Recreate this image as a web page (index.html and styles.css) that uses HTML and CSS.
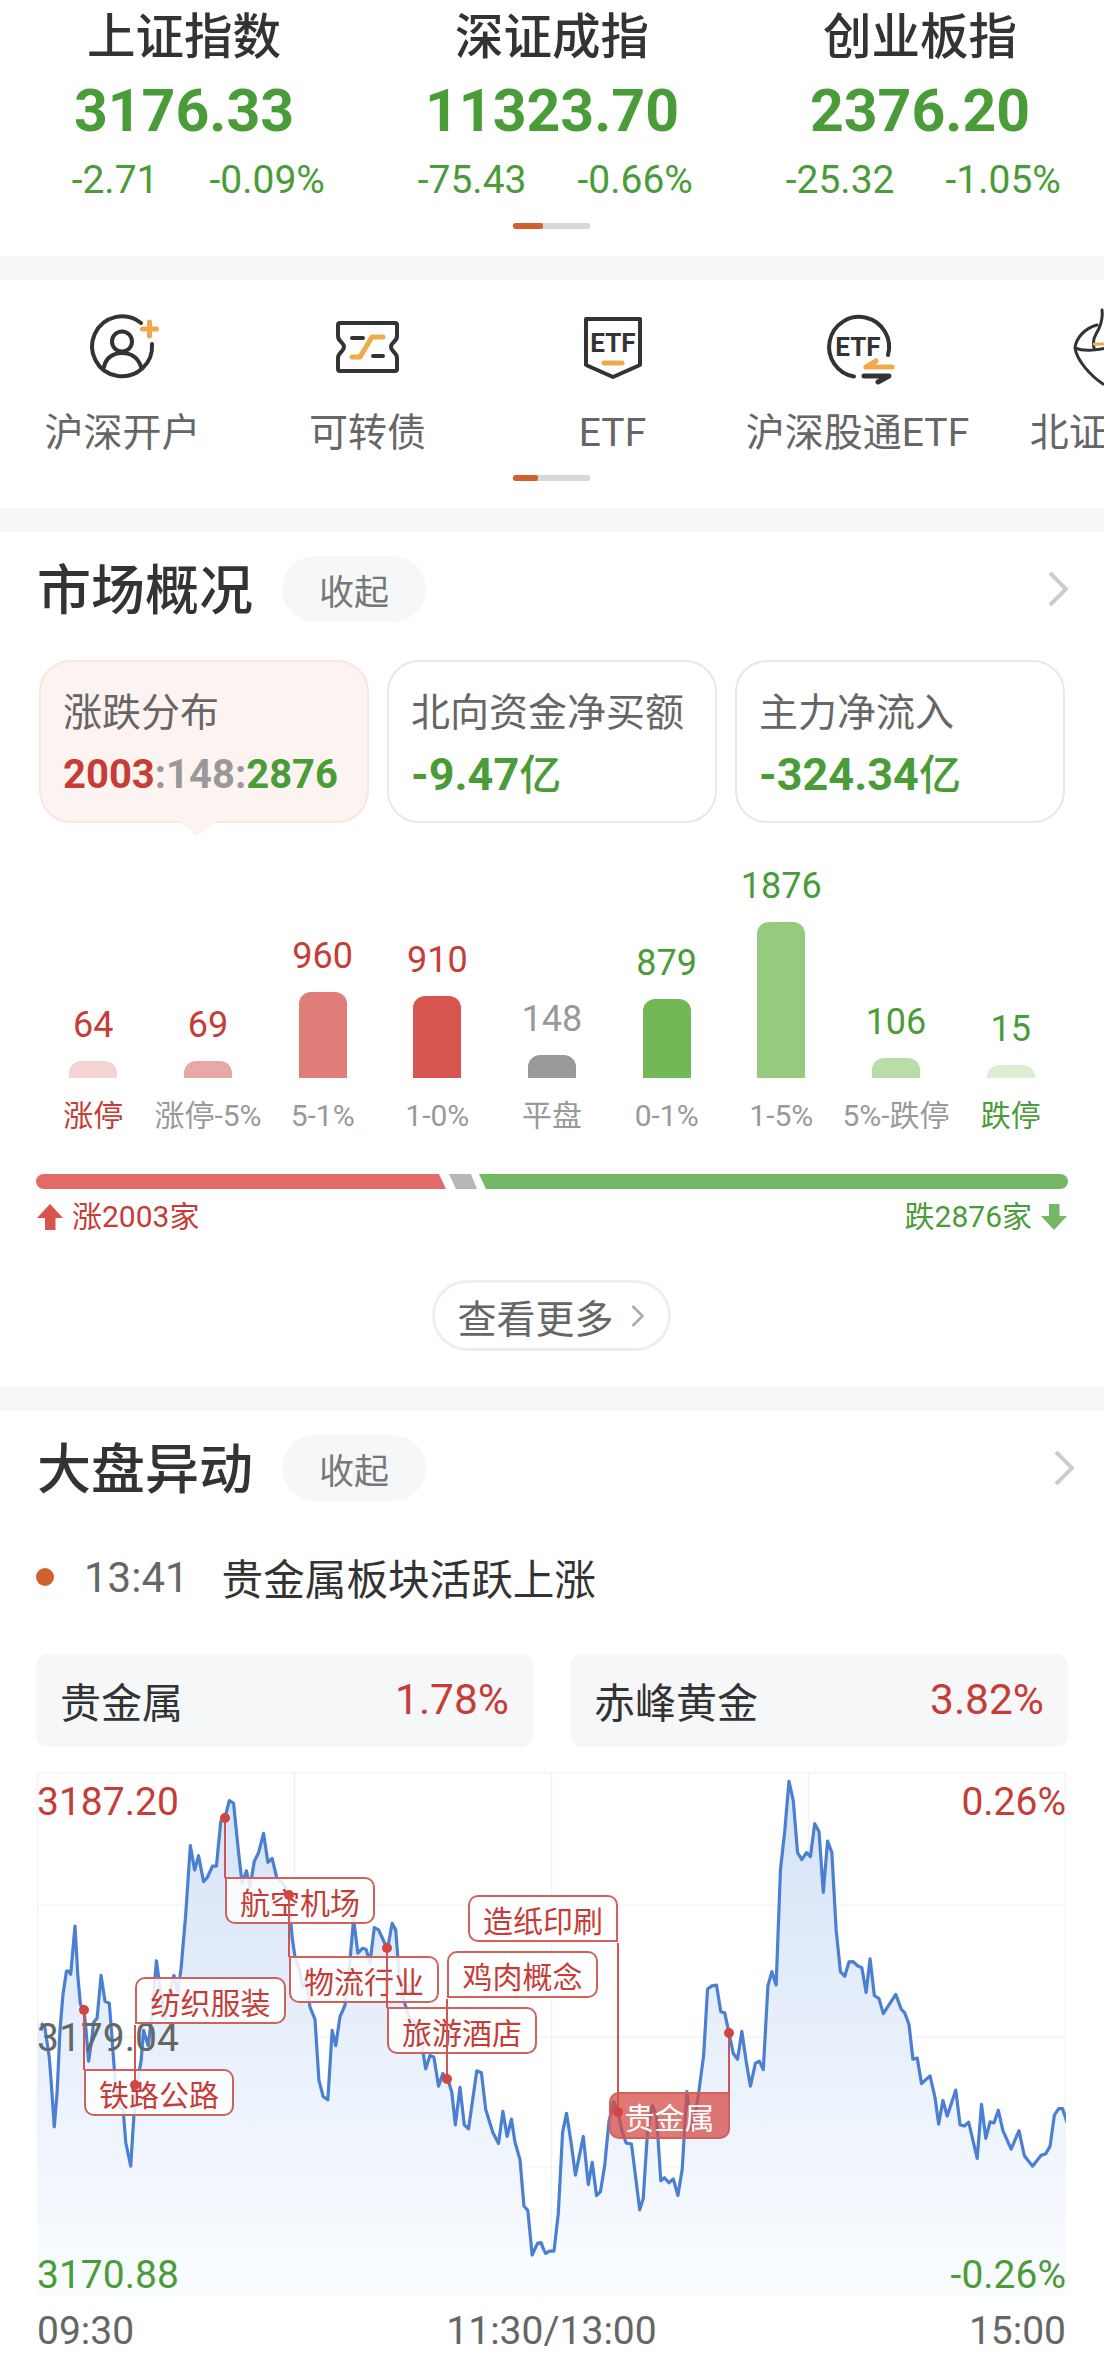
FILE: index.html
```html
<!DOCTYPE html>
<html lang="zh-CN">
<head>
<meta charset="utf-8">
<title>行情</title>
<link rel="stylesheet" href="styles.css">
</head>
<body>
<main class="page">
  <section class="panel indices">
    <div class="index-grid">
      <div class="index"><div class="index-name">上证指数</div><div class="index-value">3176.33</div><div class="index-change"><span>-2.71</span><span>-0.09%</span></div></div>
      <div class="index"><div class="index-name">深证成指</div><div class="index-value">11323.70</div><div class="index-change"><span>-75.43</span><span>-0.66%</span></div></div>
      <div class="index"><div class="index-name">创业板指</div><div class="index-value">2376.20</div><div class="index-change"><span>-25.32</span><span>-1.05%</span></div></div>
    </div>
    <div class="pager pager-a"><i></i></div>
  </section>

  <section class="panel shortcuts">
    <div class="shortcut-row">
      <div class="shortcut">
        <svg class="ico" viewBox="0 0 80 80"><path class="dk" d="M58 17A30 30 0 1 0 69 38"/><circle class="dk" cx="39" cy="35.5" r="10"/><path class="dk" d="M21 61C23 51 31 47 39 47C47 47 55 51 58 61"/><path class="or" d="M66.500 16V30M59.500 23H73.500"/></svg>
        <span>沪深开户</span>
      </div>
      <div class="shortcut">
        <svg class="ico" viewBox="0 0 80 80"><path class="dk" d="M12 17H67a2 2 0 0 1 2 2V30C69 36 63 36 63 41C63 46 69 46 69 52V63a2 2 0 0 1-2 2H12a2 2 0 0 1-2-2V52C10 46 16 46 16 41C16 36 10 36 10 30V19a2 2 0 0 1 2-2Z"/><path class="dk" d="M24 32H35M45 50H55"/><path class="or" d="M24 51H32L44 31H55"/></svg>
        <span>可转债</span>
      </div>
      <div class="shortcut">
        <svg class="ico" viewBox="0 0 80 80"><path class="dk" d="M13 13H67V59L40 71L13 59Z"/><text class="ico-text" x="40" y="46">ETF</text><path class="or" d="M31 57H49"/></svg>
        <span>ETF</span>
      </div>
      <div class="shortcut">
        <svg class="ico" viewBox="0 0 80 80"><path class="dk" d="M70 49A30 30 0 1 0 36 70.500"/><text class="ico-text" x="40" y="50">ETF</text><path class="or" d="M48 61H74M48 61L58 55"/><path class="dk thick" d="M46 70H71L60 76"/></svg>
        <span>沪深股通ETF</span>
      </div>
      <div class="shortcut">
        <svg class="ico" viewBox="0 0 80 80"><path class="dk thin" d="M34 19C22 22 13 32 12 42C14 55 28 70 40 78M12 42C22 46 32 44 44 42M39 4C40 12 38 20 33 28C30 33 30 38 31 42"/><path class="or thin" d="M31 38H46"/></svg>
        <span>北证ETF</span>
      </div>
    </div>
    <div class="pager pager-b"><i></i></div>
  </section>

  <section class="panel market">
    <header class="sec-head">
      <h2>市场概况</h2><button class="fold">收起</button>
      <svg class="chev" viewBox="0 0 20 36"><path d="M2 2L18 18L2 34"/></svg>
    </header>
    <div class="cards">
      <div class="card card-on"><div class="card-label">涨跌分布</div><div class="card-value card-ratio"><b class="red">2003</b><b class="gray">:148:</b><b class="green">2876</b></div></div>
      <div class="card"><div class="card-label">北向资金净买额</div><div class="card-value green">-9.47<em>亿</em></div></div>
      <div class="card"><div class="card-label">主力净流入</div><div class="card-value green">-324.34<em>亿</em></div></div>
    </div>
    <div class="bars">
      <div class="bar-col red"><span>64</span><i class="bar b1" style="height:17px"></i></div>
      <div class="bar-col red"><span>69</span><i class="bar b2" style="height:17px"></i></div>
      <div class="bar-col red"><span>960</span><i class="bar b3" style="height:86px"></i></div>
      <div class="bar-col red"><span>910</span><i class="bar b4" style="height:82px"></i></div>
      <div class="bar-col gray"><span>148</span><i class="bar b5" style="height:23px"></i></div>
      <div class="bar-col green"><span>879</span><i class="bar b6" style="height:79px"></i></div>
      <div class="bar-col green"><span>1876</span><i class="bar b7" style="height:156px"></i></div>
      <div class="bar-col green"><span>106</span><i class="bar b8" style="height:20px"></i></div>
      <div class="bar-col green"><span>15</span><i class="bar b9" style="height:13px"></i></div>
    </div>
    <div class="bar-labels">
      <span class="red">涨停</span><span>涨停-5%</span><span>5-1%</span><span>1-0%</span><span>平盘</span><span>0-1%</span><span>1-5%</span><span>5%-跌停</span><span class="green">跌停</span>
    </div>
    <svg class="split" viewBox="0 0 1032 15"><path fill="#e26b6a" d="M7.500 0H403L410 15H7.500A7.500 7.500 0 0 1 7.500 0Z"/><path fill="#b7b7b7" d="M413 0H435L441 15H420Z"/><path fill="#74b865" d="M443 0H1024.500A7.500 7.500 0 0 1 1024.500 15H450Z"/></svg>
    <div class="legend">
      <span class="legend-item red"><svg class="arrow" viewBox="0 0 26 26"><path fill="#d9534f" d="M13 0L26 14H18.500V26H8V14H0Z"/></svg>涨2003家</span>
      <span class="legend-item green">跌2876家<svg class="arrow" viewBox="0 0 26 26"><path fill="#74b865" d="M8 0H18.500V12H26L13 26L0 12H8Z"/></svg></span>
    </div>
    <button class="more">查看更多<svg class="more-chev" viewBox="0 0 13 22"><path d="M1.500 1L11.500 11L1.500 21"/></svg></button>
  </section>

  <section class="panel moves">
    <header class="sec-head sec-head-wide">
      <h2>大盘异动</h2><button class="fold">收起</button>
      <svg class="chev" viewBox="0 0 20 36"><path d="M2 2L18 18L2 34"/></svg>
    </header>
    <div class="event"><i class="event-dot"></i><span class="event-time">13:41</span><span class="event-text">贵金属板块活跃上涨</span></div>
    <div class="tiles">
      <div class="tile"><span>贵金属</span><b class="red">1.78%</b></div>
      <div class="tile"><span>赤峰黄金</span><b class="red">3.82%</b></div>
    </div>
    <div class="chart">
      <svg class="chart-svg" viewBox="37 12 1029 526" preserveAspectRatio="none">
        <defs>
          <linearGradient id="area" gradientUnits="userSpaceOnUse" x1="0" y1="30" x2="0" y2="1395"><stop offset="0" stop-color="#d4e2f7"/><stop offset="1" stop-color="#fbfdff"/></linearGradient>
        </defs>
        <g class="grid">
          <rect x="37.500" y="12.500" width="1028" height="525"/>
          <path d="M37 277H1066M294.500 12V538M551.500 12V538M808.500 12V538"/>
          <path class="dash" d="M37 145H1066M37 407H1066"/>
        </g>
        <g transform="scale(0.35714 0.3861)">
          <polygon class="area" points="103,680 115,682 125,690 138,770 143,830 152,950 160,860 168,700 176,610 186,547 192,547 198,555 210,430 218,560 225,632 235,650 240,690 248,780 256,730 262,680 272,668 283,558 294,625 306,630 312,700 320,800 328,880 335,900 345,905 352,990 366,1052 375,920 385,830 395,780 402,700 415,740 425,660 438,520 448,590 462,668 475,600 487,558 498,600 507,540 520,400 533,222 545,285 556,248 570,315 580,305 595,275 606,275 618,160 630,150 642,105 654,112 668,240 678,320 690,287 700,330 712,262 724,240 738,190 750,265 762,255 775,305 790,318 800,330 810,370 818,460 826,510 838,540 848,590 858,570 868,640 882,672 893,830 905,872 918,880 930,700 940,740 952,665 966,635 978,540 990,412 1002,500 1015,488 1025,490 1036,525 1048,434 1060,440 1075,470 1085,490 1098,423 1108,440 1118,560 1130,620 1145,665 1160,680 1180,730 1192,800 1204,765 1215,770 1228,845 1240,812 1255,830 1265,860 1275,945 1288,848 1300,945 1312,955 1335,805 1348,810 1360,905 1380,965 1396,993 1408,910 1420,975 1432,930 1442,990 1456,1035 1467,1155 1478,1167 1490,1282 1505,1252 1515,1250 1523,1270 1523,1395 103,1395"/>
          <polyline class="line" points="115,682 125,690 138,770 143,830 152,950 160,860 168,700 176,610 186,547 192,547 198,555 210,430 218,560 225,632 235,650 240,690 248,780 256,730 262,680 272,668 283,558 294,625 306,630 312,700 320,800 328,880 335,900 345,905 352,990 366,1052 375,920 385,830 395,780 402,700 415,740 425,660 438,520 448,590 462,668 475,600 487,558 498,600 507,540 520,400 533,222 545,285 556,248 570,315 580,305 595,275 606,275 618,160 630,150 642,105 654,112 668,240 678,320 690,287 700,330 712,262 724,240 738,190 750,265 762,255 775,305 790,318 800,330 810,370 818,460 826,510 838,540 848,590 858,570 868,640 882,672 893,830 905,872 918,880 930,700 940,740 952,665 966,635 978,540 990,412 1002,500 1015,488 1025,490 1036,525 1048,434 1060,440 1075,470 1085,490 1098,423 1108,440 1118,560 1130,620 1145,665 1160,680 1180,730 1192,800 1204,765 1215,770 1228,845 1240,812 1255,830 1265,860 1275,945 1288,848 1300,945 1312,955 1335,805 1348,810 1360,905 1380,965 1396,993 1408,910 1420,975 1432,930 1442,990 1456,1035 1467,1155 1478,1167 1490,1282 1505,1252 1515,1250 1523,1270"/>
        </g>
        <g transform="translate(544 0) scale(0.35714 0.3861)">
          <polygon class="area" points="0,1270 5,1278 15,1272 28,1272 40,1175 52,965 63,915 75,985 88,1075 110,975 124,1100 135,1042 147,1128 158,1118 170,1050 182,935 195,885 207,910 218,960 230,992 245,995 268,1165 278,1135 290,960 303,895 315,920 327,1090 337,1082 350,1095 362,1085 375,1128 387,1060 400,858 415,960 432,870 447,765 458,593 470,585 483,583 495,652 506,655 518,707 530,760 542,775 554,703 566,780 578,845 592,785 603,780 614,802 627,585 638,548 650,583 662,285 674,185 686,55 698,105 710,240 722,258 735,240 746,250 758,165 770,185 782,343 794,210 806,240 818,440 830,548 842,560 854,523 865,522 878,533 890,538 902,602 913,515 925,610 938,618 950,657 985,607 1000,645 1010,655 1022,685 1033,775 1045,772 1057,838 1081,818 1095,875 1105,943 1117,882 1129,922 1153,855 1165,945 1177,948 1189,938 1213,1032 1225,892 1237,980 1249,937 1260,940 1272,907 1285,960 1308,1008 1330,960 1345,1025 1368,1052 1392,1024 1405,1020 1417,1000 1429,920 1441,903 1452,903 1465,940 1465,1395 0,1395"/>
          <polyline class="line" points="0,1270 5,1278 15,1272 28,1272 40,1175 52,965 63,915 75,985 88,1075 110,975 124,1100 135,1042 147,1128 158,1118 170,1050 182,935 195,885 207,910 218,960 230,992 245,995 268,1165 278,1135 290,960 303,895 315,920 327,1090 337,1082 350,1095 362,1085 375,1128 387,1060 400,858 415,960 432,870 447,765 458,593 470,585 483,583 495,652 506,655 518,707 530,760 542,775 554,703 566,780 578,845 592,785 603,780 614,802 627,585 638,548 650,583 662,285 674,185 686,55 698,105 710,240 722,258 735,240 746,250 758,165 770,185 782,343 794,210 806,240 818,440 830,548 842,560 854,523 865,522 878,533 890,538 902,602 913,515 925,610 938,618 950,657 985,607 1000,645 1010,655 1022,685 1033,775 1045,772 1057,838 1081,818 1095,875 1105,943 1117,882 1129,922 1153,855 1165,945 1177,948 1189,938 1213,1032 1225,892 1237,980 1249,937 1260,940 1272,907 1285,960 1308,1008 1330,960 1345,1025 1368,1052 1392,1024 1405,1020 1417,1000 1429,920 1441,903 1452,903 1465,940"/>
        </g>
      </svg>
      <span class="axis-val val-hi red">3187.20</span>
      <span class="axis-val val-mid">3179.04</span>
      <span class="axis-val val-lo green">3170.88</span>
      <span class="axis-val pct-hi red">0.26%</span>
      <span class="axis-val pct-lo green">-0.26%</span>
      <div class="tag t-air">航空机场</div>
      <div class="tag t-rail">铁路公路</div>
      <div class="tag t-tex">纺织服装</div>
      <div class="tag t-log">物流行业</div>
      <div class="tag t-tour">旅游酒店</div>
      <div class="tag t-chick">鸡肉概念</div>
      <div class="tag t-paper">造纸印刷</div>
      <div class="tag t-gold">贵金属</div>
      <svg class="chart-svg" viewBox="37 1772 1029 526" preserveAspectRatio="none">
        <g class="links">
          <path d="M225 1818V1878M84 2010V2070M135 2025V2085M289 1895V1957M387 1948V2008M447 1999V2079M618 1943V2112M729 2033V2093"/>
        </g>
        <g class="dots">
          <circle cx="225" cy="1818" r="5"/><circle cx="84" cy="2010" r="5"/><circle cx="135" cy="2085" r="5"/><circle cx="289" cy="1895" r="5"/><circle cx="387" cy="1948" r="5"/><circle cx="447" cy="2079" r="5"/><circle cx="618" cy="2112" r="5"/><circle cx="729" cy="2033" r="5"/>
        </g>
      </svg>
    </div>
    <div class="time-axis"><span>09:30</span><span>11:30/13:00</span><span>15:00</span></div>
  </section>
</main>
</body>
</html>
```
FILE: styles.css
```css
* { box-sizing: border-box; }
html, body { margin: 0; padding: 0; background: #f6f7f9; }
body { width: 1104px; height: 2365px; overflow: hidden; font-family: Roboto, "Noto Sans CJK SC", sans-serif; color: #333; }
.page { display: flex; flex-direction: column; gap: 24px; height: 2365px; }
.panel { background: #fff; }
.red { color: #c53d36; }
.gray { color: #999; }
.green { color: #4a9c38; }

.indices { height: 256px; padding-top: 9px; }
.index-grid { display: grid; grid-template-columns: repeat(3, 368px); }
.index { display: flex; flex-direction: column; align-items: center; }
.index-name { font-size: 48.500px; line-height: 58px; font-weight: 500; color: #333; }
.index-value { font-size: 59px; line-height: 70px; font-weight: 700; color: #4a9c38; margin-top: 9px; }
.index-change { display: grid; grid-template-columns: 1fr 1fr; column-gap: 51px; width: 100%; margin-top: 12px; font-size: 39px; line-height: 44px; color: #4a9c38; }
.index-change span:first-child { text-align: right; }

.pager { width: 77px; height: 6px; margin: 21px 0 0 513px; background: #d4d7db; border-radius: 2px; overflow: hidden; }
.pager i { display: block; height: 100%; background: #d0602c; border-radius: 2px; }
.pager-a i { width: 30px; }
.pager-b i { width: 25px; }

.shortcuts { height: 228px; padding-top: 26px; overflow: hidden; }
.shortcut-row { display: flex; width: 1300px; height: 151px; }
.shortcut { width: 245px; flex: none; display: flex; flex-direction: column; align-items: center; }
.shortcut span { font-size: 39px; line-height: 50px; margin-top: 22px; color: #666; white-space: nowrap; }
.ico { width: 80px; height: 80px; overflow: visible; flex: none; }
.dk, .or { fill: none; stroke-linecap: round; stroke-linejoin: round; stroke-width: 4px; }
.dk { stroke: #333; }
.or { stroke: #eeaa4d; stroke-width: 5px; }
.thick { stroke-width: 5px; }
.thin { stroke-width: 3px; }
.ico-text { font-family: Roboto, sans-serif; font-weight: 700; font-size: 26px; fill: #333; text-anchor: middle; }
.shortcuts .pager { margin-top: 18px; }

.market { height: 855px; padding-top: 24px; }
.sec-head { display: flex; align-items: center; height: 66px; padding: 0 36px 0 37px; }
.sec-head-wide { padding-right: 30px; }
.sec-head h2 { margin: 6px 0 0; font-size: 54px; line-height: 60px; font-weight: 500; color: #333; }
.fold { width: 144px; height: 66px; margin-left: 29px; padding: 0; border: 0; border-radius: 33px; background: #f6f7f9; font: inherit; font-size: 35px; color: #777; }
.chev { width: 20px; height: 36px; margin-left: auto; }
.chev path { fill: none; stroke: #ccc; stroke-width: 4px; }

.cards { display: grid; grid-template-columns: repeat(3, 330px); gap: 18px; margin-top: 38px; padding-left: 39px; }
.card { position: relative; height: 163px; padding: 26px 0 0 22px; border: 2px solid #e8e8e8; border-radius: 32px; background: #fff; }
.card-on { background: #fdf4f1; border-color: #fbe6dd; }
.card-on::after { content: ""; position: absolute; left: 137px; bottom: -15px; width: 38px; height: 15px; background: #fdf4f1; clip-path: polygon(0 0, 100% 0, 50% 100%); }
.card-label { font-size: 39px; line-height: 50px; color: #666; white-space: nowrap; }
.card-value { margin-top: 12px; font-size: 45px; line-height: 50px; font-weight: 700; white-space: nowrap; }
.card-ratio { font-size: 40px; }
.card-value b { font-weight: 700; }
.card-value em { font-style: normal; font-size: 42px; font-weight: 500; }

.bars { display: grid; grid-template-columns: repeat(9, 1fr); height: 213px; margin-top: 42px; padding: 0 36px; align-items: end; }
.bar-col { display: flex; flex-direction: column; align-items: center; }
.bar-col span { font-size: 36px; line-height: 40px; margin-bottom: 16px; }
.bar { display: block; width: 48px; border-radius: 12px 12px 0 0; }
.b1 { background: #f3d3d3; }
.b2 { background: #e8a8a8; }
.b3 { background: #df7d78; }
.b4 { background: #d8544f; }
.b5 { background: #999; }
.b6 { background: #72b855; }
.b7 { background: #94cb7e; }
.b8 { background: #b9dca9; }
.b9 { background: #dbedd2; }
.bar-labels { display: grid; grid-template-columns: repeat(9, 1fr); margin-top: 20px; padding: 0 36px; font-size: 30px; line-height: 36px; color: #999; text-align: center; white-space: nowrap; }

.split { display: block; width: 1032px; height: 15px; margin: 40px 0 0 36px; }
.legend { display: flex; justify-content: space-between; margin-top: 10px; padding: 0 37px 0 37px; font-size: 30px; line-height: 36px; }
.legend-item { display: flex; align-items: center; gap: 9px; }
.arrow { width: 26px; height: 26px; }
.more { display: flex; align-items: center; justify-content: center; gap: 17px; width: 239px; height: 71px; margin: 45px 0 0 432px; padding: 0 2px 0 0; border: 3px solid #eee; border-radius: 36px; background: #fff; font: inherit; font-size: 39px; color: #666; }
.more-chev { width: 13px; height: 22px; }
.more-chev path { fill: none; stroke: #aaa; stroke-width: 2.500px; }

.moves { flex: 1; padding-top: 24px; }
.event { display: flex; align-items: center; height: 50px; margin-top: 51px; padding-left: 36px; }
.event-dot { width: 18px; height: 18px; border-radius: 50%; background: #d0602c; flex: none; }
.event-time { margin-left: 30px; font-size: 42px; color: #666; }
.event-text { margin-left: 33px; font-size: 41.600px; color: #333; }
.tiles { display: grid; grid-template-columns: 497px 498px; gap: 37px; margin-top: 52px; padding-left: 36px; }
.tile { display: flex; align-items: center; justify-content: space-between; height: 93px; padding: 0 24px 2px 24px; background: #f6f7f9; border-radius: 12px; font-size: 41px; }
.tile b { font-size: 42.500px; font-weight: 400; }

.chart { position: relative; width: 1029px; height: 526px; margin: 25px 0 0 37px; }
.chart-svg { position: absolute; left: 0; top: 0; width: 100%; height: 100%; }
.grid rect, .grid path { fill: none; stroke: #f1f2f5; stroke-width: 1.500px; }
.grid .dash { stroke: #eef0f3; stroke-dasharray: 2 2; }
.area { fill: url(#area); }
.line { fill: none; stroke: #4a7fd2; stroke-width: 3.200px; stroke-linejoin: round; vector-effect: non-scaling-stroke; }
.axis-val { position: absolute; font-size: 39px; line-height: 44px; white-space: nowrap; }
.val-hi { left: 0; top: 8px; }
.val-mid { left: 0; top: 244px; color: #666; }
.val-lo { left: 0; top: 481px; }
.pct-hi { right: 0; top: 8px; }
.pct-lo { right: 0; top: 481px; }
.tag { position: absolute; display: flex; align-items: center; justify-content: center; width: 150px; height: 47px; border: 2px solid #d0615c; border-radius: 10px; background: rgba(255, 255, 255, 0.85); font-size: 30px; color: #c53d36; white-space: nowrap; }
.t-air { left: 188px; top: 105px; border-top-left-radius: 0; }
.t-rail { left: 47px; top: 297px; border-top-left-radius: 0; }
.t-tex { left: 98px; top: 205px; width: 151px; border-bottom-left-radius: 0; }
.t-log { left: 252px; top: 184px; border-top-left-radius: 0; }
.t-tour { left: 350px; top: 235px; border-top-left-radius: 0; }
.t-chick { left: 410px; top: 179px; width: 151px; border-bottom-left-radius: 0; }
.t-paper { left: 431px; top: 123px; border-bottom-right-radius: 0; }
.t-gold { left: 572px; top: 320px; width: 121px; border-top-right-radius: 0; background: rgba(214, 78, 72, 0.76); color: #fff; }
.links path { fill: none; stroke: #cf5652; stroke-width: 2px; }
.dots circle { fill: #d4453f; }
.time-axis { display: flex; justify-content: space-between; margin: 11px 38px 0 37px; font-size: 39px; line-height: 44px; color: #666; }
```
